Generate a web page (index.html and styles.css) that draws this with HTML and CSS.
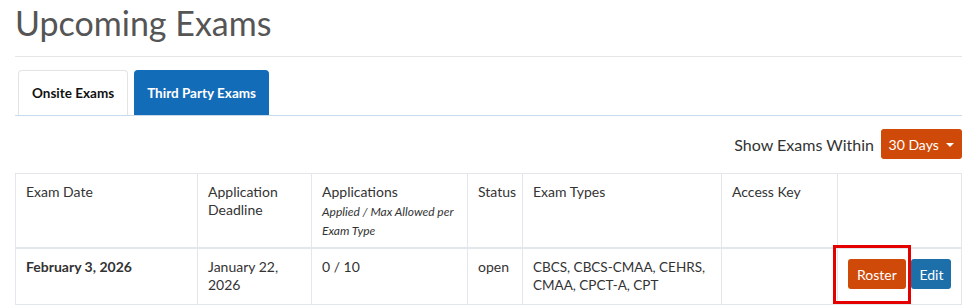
FILE: index.html
```html
<!DOCTYPE html>
<html lang="en">
<head>
    <meta charset="UTF-8">
    <meta name="viewport" content="width=device-width, initial-scale=1.0">
    <title>Upcoming Exams</title>
    <link rel="stylesheet" href="styles.css">
</head>
<body>
    <div class="page">
        <h1 class="title">Upcoming Exams</h1>
        <hr class="rule">

        <ul class="tabs">
            <li class="tab">Onsite Exams</li>
            <li class="tab active">Third Party Exams</li>
        </ul>

        <div class="filter">
            <span class="filter-label">Show Exams Within</span>
            <button class="btn btn-orange dropdown">30 Days <span class="caret"></span></button>
        </div>

        <table class="exams">
            <thead>
                <tr>
                    <th class="c-date">Exam Date</th>
                    <th class="c-deadline">Application Deadline</th>
                    <th class="c-apps">Applications<br><em>Applied / Max Allowed per Exam Type</em></th>
                    <th class="c-status">Status</th>
                    <th class="c-types">Exam Types</th>
                    <th class="c-key">Access Key</th>
                    <th class="c-actions"></th>
                </tr>
            </thead>
            <tbody>
                <tr>
                    <td><strong>February 3, 2026</strong></td>
                    <td>January 22, 2026</td>
                    <td>0 / 10</td>
                    <td>open</td>
                    <td class="types">CBCS, CBCS-CMAA, CEHRS, CMAA, CPCT-A, CPT</td>
                    <td></td>
                    <td class="actions">
                        <span class="highlight"></span>
                        <button class="btn btn-orange">Roster</button>
                        <button class="btn btn-blue">Edit</button>
                    </td>
                </tr>
            </tbody>
        </table>
    </div>
</body>
</html>
```

FILE: styles.css
```css
body{
    margin: 0;
    font-family: Lato, "Open Sans", sans-serif;
    color: #333;
    background: #fff;
}
.page{
    width: 947px;
    padding: 0 14px 0 15px;
}
.title{
    margin: 0;
    padding-top: 3px;
    font-size: 34px;
    font-weight: 400;
    line-height: 40px;
    color: #555;
}
.rule{
    margin: 13px 0 0 0;
    border: 0;
    border-top: 1px solid #e6e6e6;
}
.tabs{
    list-style: none;
    margin: 13px 0 0 0;
    padding: 0 0 0 3px;
    display: flex;
    gap: 6px;
    border-bottom: 1px solid #c9dbeb;
}
.tab{
    height: 44px;
    padding: 0 13px;
    display: flex;
    align-items: center;
    font-size: 13.5px;
    font-weight: 700;
    color: #111;
    border: 1px solid #e3e3e3;
    border-bottom: 0;
    border-radius: 4px 4px 0 0;
}
.tab.active{
    background: #136cb8;
    border-color: #136cb8;
    color: #fff;
    padding: 0 12px;
}
.filter{
    display: flex;
    justify-content: flex-end;
    align-items: center;
    gap: 7px;
    margin-top: 13px;
    height: 30px;
}
.filter-label{
    font-size: 16px;
    color: #333;
}
.btn{
    height: 30px;
    border: 0;
    border-radius: 3px;
    font-family: inherit;
    font-size: 14px;
    color: #fff;
    padding: 0 9px;
    white-space: nowrap;
    cursor: pointer;
}
.btn-orange{
    background: #cf4a09;
}
.btn-blue{
    background: #1c6fa9;
    padding: 0 8px;
}
.dropdown{
    width: 81px;
    padding: 0;
    font-size: 14px;
}
.caret{
    display: inline-block;
    margin-left: 4px;
    vertical-align: 3px;
    border-left: 4px solid transparent;
    border-right: 4px solid transparent;
    border-top: 4px solid #fff;
}
.exams{
    margin-top: 14px;
    width: 947px;
    border-collapse: collapse;
    table-layout: fixed;
    font-size: 14px;
}
.exams th,
.exams td{
    border: 1px solid #e3e6ea;
    padding: 9px 10px 10px 10px;
    text-align: left;
    vertical-align: top;
    line-height: 18px;
    font-weight: 400;
}
.exams th{
    border-bottom-width: 2px;
    padding-bottom: 7px;
}
.exams th em{
    display: block;
    font-size: 12px;
    line-height: 19px;
    padding-top: 1px;
}
.exams td strong{
    font-weight: 700;
}
.exams td.types{
    padding-right: 2px;
    font-size: 13.5px;
}
.c-date{ width: 161px; }
.c-deadline{ width: 93px; }
.c-apps{ width: 135px; }
.c-status{ width: 34px; }
.c-types{ width: 178px; }
.c-key{ width: 95px; }
.exams td.actions{
    position: relative;
    padding-top: 10px;
    white-space: nowrap;
}
.actions .btn + .btn{
    margin-left: 2px;
}
.highlight{
    position: absolute;
    left: -5px;
    top: -4px;
    width: 72px;
    height: 53px;
    border: 3px solid #e50000;
}
```
